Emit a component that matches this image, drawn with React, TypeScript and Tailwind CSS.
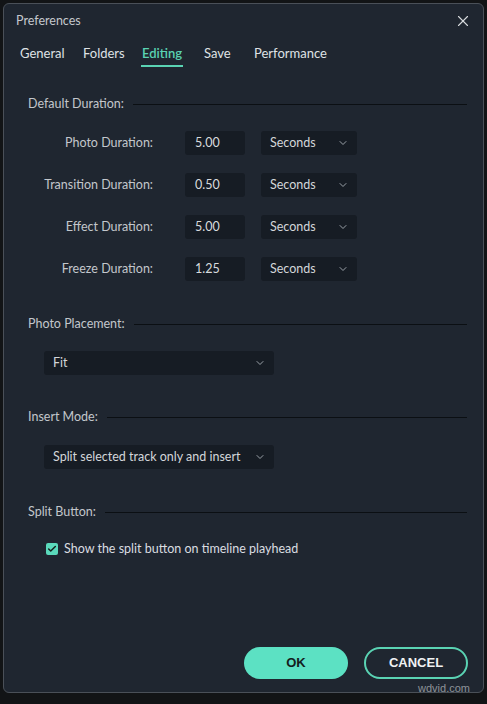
import { X, ChevronDown, Check } from "lucide-react";

const TABS = [
  { label: "General", w: "w-[63px]" },
  { label: "Folders", w: "w-[59px]" },
  { label: "Editing", w: "w-[62px]", active: true },
  { label: "Save", w: "w-[50px]" },
  { label: "Performance", w: "w-[100px]" },
];

const DURATIONS = [
  { label: "Photo Duration:", value: "5.00" },
  { label: "Transition Duration:", value: "0.50" },
  { label: "Effect Duration:", value: "5.00" },
  { label: "Freeze Duration:", value: "1.25" },
];

function SectionHeader({ title }: { title: string }) {
  return (
    <div className="flex items-center gap-[9px] h-4">
      <span className="text-[12.5px] leading-4 text-[#c3c7cc] whitespace-nowrap">{title}</span>
      <div className="flex-1 h-px bg-[#0b0f13]" />
    </div>
  );
}

function Select({ value, className }: { value: string; className: string }) {
  return (
    <div
      className={`flex items-center justify-between h-6 rounded-[3px] bg-[#161c24] pl-[9px] pr-[8px] text-[12.5px] text-[#d3d6da] ${className}`}
    >
      <span>{value}</span>
      <ChevronDown className="w-3 h-3 text-[#9aa1a8]" strokeWidth={2} />
    </div>
  );
}

export default function App() {
  return (
    <div
      className="w-[487px] h-[704px] bg-[#121416] pt-[3px] pl-[3px] overflow-hidden"
      style={{ fontFamily: "Lato, 'Noto Sans', sans-serif" }}
    >
      <div className="w-[481px] h-[690px] rounded-[6px] border border-[#4a5058] bg-[#1f2630] flex flex-col">
        {/* Title bar */}
        <div className="flex items-start justify-between pt-[9px] pl-[12px] pr-[11px] h-[40px]">
          <span className="text-[12.5px] leading-4 text-[#c4c8cd]">Preferences</span>
          <X className="w-[18px] h-[18px] text-[#d8dbde] -mt-[1px]" strokeWidth={1.5} />
        </div>

        {/* Tabs */}
        <div className="flex pl-[15px] h-[26px]">
          {TABS.map((t) => (
            <div key={t.label} className={`${t.w} flex flex-col items-start`}>
              <div className="flex flex-col items-center">
                <span
                  className={`text-[13px] leading-[18px] px-[1px] ${
                    t.active ? "text-[#5ad3b3] font-semibold" : "text-[#dfe2e5]"
                  }`}
                >
                  {t.label}
                </span>
                {t.active && <div className="mt-[3px] h-[2px] w-full bg-[#5ad3b3]" />}
              </div>
            </div>
          ))}
        </div>

        {/* Content */}
        <div className="flex flex-col pl-[24px] pr-[16px]">
          <div className="mt-[26px]">
            <SectionHeader title="Default Duration:" />
          </div>
          <div className="flex flex-col gap-[18px] mt-[19px]">
            {DURATIONS.map((d) => (
              <div key={d.label} className="flex items-center">
                <span className="w-[125px] text-right text-[12.5px] text-[#c3c7cc]">{d.label}</span>
                <div className="ml-[32px] w-[60px] h-6 rounded-[3px] bg-[#161c24] flex items-center pl-[10px] text-[12.5px] text-[#d8dbde]">
                  {d.value}
                </div>
                <Select value="Seconds" className="ml-[16px] w-[96px]" />
              </div>
            ))}
          </div>

          <div className="mt-[35px]">
            <SectionHeader title="Photo Placement:" />
          </div>
          <Select value="Fit" className="mt-[19px] ml-[16px] w-[230px]" />

          <div className="mt-[34px]">
            <SectionHeader title="Insert Mode:" />
          </div>
          <Select value="Split selected track only and insert" className="mt-[20px] ml-[16px] w-[230px]" />

          <div className="mt-[35px]">
            <SectionHeader title="Split Button:" />
          </div>
          <div className="mt-[21px] ml-[18px] flex items-center gap-[6px] h-4">
            <div className="w-3 h-3 rounded-[2px] bg-[#5ad9bb] flex items-center justify-center">
              <Check className="w-[10px] h-[10px] text-[#14201d]" strokeWidth={3.5} />
            </div>
            <span className="text-[12.5px] text-[#dadde0]">Show the split button on timeline playhead</span>
          </div>
        </div>

        {/* Footer */}
        <div className="mt-auto flex justify-end gap-4 pr-[15px] pb-[13px]">
          <button className="w-[104px] h-8 rounded-full bg-[#5ce1c3] text-[#14201d] text-[13px] font-bold" style={{ fontFamily: "'Liberation Sans', Arial, sans-serif" }}>
            OK
          </button>
          <button className="w-[104px] h-8 rounded-full border-2 border-[#5ad3b3] text-[#f0f2f3] text-[13px] font-bold" style={{ fontFamily: "'Liberation Sans', Arial, sans-serif" }}>
            CANCEL
          </button>
        </div>
      </div>
      <div className="flex justify-end pr-[17px] -mt-[13px]">
        <span className="text-[11px] text-[#8e9399]" style={{ fontFamily: "'Liberation Sans', Arial, sans-serif" }}>wdvid.com</span>
      </div>
    </div>
  );
}
